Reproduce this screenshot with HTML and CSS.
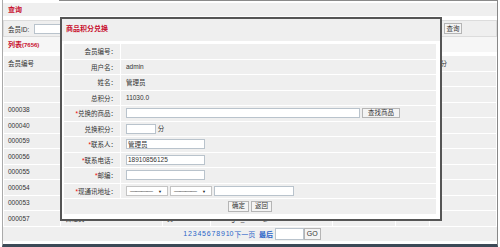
FILE: index.html
```html
<!DOCTYPE html>
<html lang="zh-CN">
<head>
    <meta charset="UTF-8">
    <title>会员列表</title>
    <link rel="stylesheet" href="styles.css">
</head>
<body>
    <div class="frame">
        <div class="bar">查询</div>
        <div class="query-row">
            <span class="query-label">会员ID:</span>
            <input class="txt member-id" type="text">
            <button class="btn query-btn">查询</button>
        </div>
        <div class="bar list-bar">列表<small>(7656)</small></div>

        <table class="grid">
            <tr>
                <th class="c-id">会员编号</th>
                <th class="c-user">用户名</th>
                <th class="c-name">姓名</th>
                <th class="c-mail">邮箱</th>
                <th class="c-date">注册时间</th>
                <th class="c-sex">性别</th>
                <th>积分</th>
            </tr>
            <tr><td></td><td></td><td></td><td></td><td></td><td></td><td></td></tr>
            <tr><td></td><td></td><td></td><td></td><td></td><td></td><td></td></tr>
            <tr><td>000038</td><td>manager</td><td>李明</td><td>liming@163.com</td><td>2013-05-02</td><td>男</td><td></td></tr>
            <tr><td>000040</td><td>zhangwei</td><td>张伟</td><td>zw@qq.com</td><td>2013-05-03</td><td>男</td><td></td></tr>
            <tr><td>000059</td><td>wangfang</td><td>王芳</td><td>wf@126.com</td><td>2013-05-06</td><td>女</td><td></td></tr>
            <tr><td>000056</td><td>liuyang</td><td>刘洋</td><td>ly@163.com</td><td>2013-05-06</td><td>男</td><td></td></tr>
            <tr><td>000055</td><td>chenjing</td><td>陈静</td><td>cj@qq.com</td><td>2013-05-07</td><td>女</td><td></td></tr>
            <tr><td>000054</td><td>yangli</td><td>杨丽</td><td>yl@sina.com</td><td>2013-05-08</td><td>女</td><td></td></tr>
            <tr><td>000053</td><td>zhaolei</td><td>赵磊</td><td>zl@163.com</td><td>2013-05-08</td><td>男</td><td></td></tr>
            <tr><td>000057</td><td>管理员</td><td>男</td><td>manager_admin@163.com</td><td>0</td><td>—</td><td></td></tr>
        </table>

        <div class="pager">
            <a href="#">1</a><a href="#">2</a><a href="#">3</a><a href="#">4</a><a href="#">5</a><a href="#">6</a><a href="#">7</a><a href="#">8</a><a href="#">9</a><a href="#">10</a><a href="#">下一页</a>
            <a href="#" class="last">最后</a>
            <input class="txt page-no" type="text">
            <button class="btn go-btn">GO</button>
        </div>

        <div class="dialog">
            <div class="dialog-title">商品积分兑换</div>
            <div class="dialog-body">
                <table class="form">
                    <tr><th>会员编号：</th><td></td></tr>
                    <tr><th>用户名：</th><td>admin</td></tr>
                    <tr><th>姓名：</th><td>管理员</td></tr>
                    <tr><th>总积分：</th><td>11030.0</td></tr>
                    <tr>
                        <th><em>*</em>兑换的商品：</th>
                        <td><input class="txt goods" type="text"><button class="btn find-btn">查找商品</button></td>
                    </tr>
                    <tr><th>兑换积分：</th><td><input class="txt points" type="text"> 分</td></tr>
                    <tr><th><em>*</em>联系人：</th><td><input class="txt mid" type="text" value="管理员"></td></tr>
                    <tr><th><em>*</em>联系电话：</th><td><input class="txt mid" type="text" value="18910856125"></td></tr>
                    <tr><th><em>*</em>邮编：</th><td><input class="txt mid" type="text"></td></tr>
                    <tr>
                        <th><em>*</em>现通讯地址：</th>
                        <td class="addr">
                            <span class="sel">————</span><span class="sel sel2">————</span><input class="txt street" type="text">
                        </td>
                    </tr>
                    <tr><td colspan="2" class="actions"><button class="btn">确定</button><button class="btn">返回</button></td></tr>
                </table>
            </div>
        </div>
    </div>
</body>
</html>
```

FILE: styles.css
```css
body {
    margin: 0;
    font-family: "Liberation Sans", "Noto Sans CJK SC", sans-serif;
    font-size: 6.5px;
    color: #333;
    background: #fff;
}

.frame {
    position: relative;
    box-sizing: border-box;
    width: 496px;
    height: 247px;
    margin-left: 2px;
    border-left: 1px solid #aaa;
    border-right: 1px solid #888;
    border-bottom: 3px solid #3c4a57;
    padding-top: 3px;
    background: linear-gradient(#8a8a8a, #8a8a8a) 56px 0 / 440px 1px no-repeat, #fff;
}

.bar {
    height: 13px;
    line-height: 13px;
    padding-left: 5px;
    background: #efefef;
    color: #c8102e;
    font-weight: bold;
    font-size: 7px;
}

.list-bar {
    height: 15px;
    line-height: 15px;
    background: #f6f6f6;
}

.list-bar small {
    font-size: 6px;
}

.query-row {
    display: flex;
    align-items: center;
    box-sizing: border-box;
    height: 17px;
    margin-top: 4px;
    padding: 0 4px;
    border: 1px solid #dcdcdc;
    background: #efefef;
}

.query-label {
    width: 26px;
}

.txt {
    box-sizing: border-box;
    height: 10px;
    padding: 0 1px;
    border: 1px solid #b9c3cc;
    background: #fff;
    font: inherit;
    color: #333;
}

.member-id {
    width: 140px;
}

.btn {
    box-sizing: border-box;
    height: 10px;
    padding: 0 2px;
    border: 1px solid #b5b5b5;
    background: #f4f4f4;
    font: inherit;
    line-height: 8px;
    color: #333;
}

.query-btn {
    width: 18px;
    height: 11px;
    margin-left: auto;
    margin-right: 30px;
    padding: 0;
}

.grid {
    width: 100%;
    margin-top: 3px;
    border-collapse: separate;
    border-spacing: 1px;
    table-layout: fixed;
}

.grid th,
.grid td {
    box-sizing: border-box;
    height: 14.5px;
    padding: 0 0 0 4px;
    background: #efefef;
    font-weight: normal;
    text-align: left;
    white-space: nowrap;
    overflow: hidden;
}

.grid .c-id { width: 56px; }
.grid .c-user { width: 101px; }
.grid .c-name { width: 47px; }
.grid .c-mail { width: 121px; }
.grid .c-date { width: 62px; }
.grid .c-sex { width: 33px; }

.pager {
    display: flex;
    align-items: center;
    justify-content: center;
    height: 14px;
    padding-left: 4px;
    background: #efefef;
    font-size: 7px;
}

.pager a {
    margin-right: 0.8px;
    color: #2a64c8;
    text-decoration: none;
}

.pager .last {
    margin-left: 3px;
    font-weight: bold;
}

.page-no {
    width: 29px;
    height: 12px;
    margin-left: 1px;
}

.go-btn {
    height: 12px;
    font-size: 7px;
}

/* dialog over the list */
.dialog {
    position: absolute;
    left: 57px;
    top: 17px;
    box-sizing: border-box;
    width: 382px;
    height: 204px;
    border: 2px solid #555;
    background: #fff;
}

.dialog-title {
    height: 22px;
    line-height: 19px;
    padding-left: 4px;
    background: #efefef;
    color: #c8102e;
    font-weight: bold;
    font-size: 7px;
}

.dialog-body {
    padding: 2px 3px 0 1px;
}

.form {
    width: 100%;
    border-collapse: separate;
    border-spacing: 1px;
}

.form th,
.form td {
    height: 14.5px;
    padding: 0;
    background: #efefef;
    font-weight: normal;
}

.form th {
    width: 53px;
    padding-right: 3px;
    text-align: right;
    white-space: nowrap;
}

.form td {
    padding-left: 5px;
}

.form em {
    font-style: normal;
    color: #e00;
}

.goods {
    width: 234px;
    vertical-align: middle;
}

.find-btn {
    margin-left: 2px;
    padding: 0 5px;
    vertical-align: middle;
}

.points {
    width: 30px;
    vertical-align: middle;
}

.mid {
    width: 79px;
    vertical-align: middle;
}

.addr {
    white-space: nowrap;
}

.sel {
    display: inline-block;
    box-sizing: border-box;
    width: 42px;
    height: 10px;
    margin-right: 2px;
    padding-left: 3px;
    border: 1px solid #c4c4c4;
    background: #fff;
    line-height: 8px;
    vertical-align: middle;
    letter-spacing: -1px;
    color: #666;
}

.sel::after {
    content: "▼";
    margin-left: 6px;
    font-size: 4px;
    letter-spacing: 0;
    color: #222;
}

.street {
    width: 80px;
    vertical-align: middle;
}

.form .actions {
    padding: 0;
    text-align: center;
}

.actions .btn {
    height: 11px;
    margin: 0 1px;
    padding: 0 3px;
}
```
